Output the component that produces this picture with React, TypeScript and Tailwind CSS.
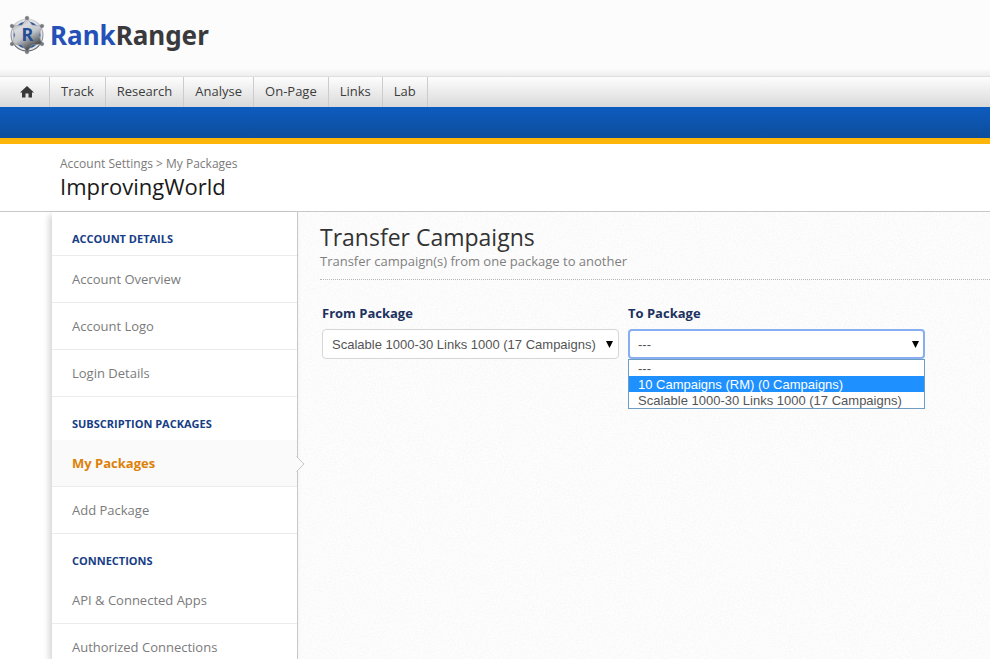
import { useState } from "react";

const NAV = ["Track", "Research", "Analyse", "On-Page", "Links", "Lab"];

const SECTIONS: { title: string; ruled?: boolean; items: string[] }[] = [
  { title: "Account Details", ruled: true, items: ["Account Overview", "Account Logo", "Login Details"] },
  { title: "Subscription Packages", items: ["My Packages", "Add Package"] },
  { title: "Connections", items: ["API & Connected Apps", "Authorized Connections"] },
];

const SCALABLE = "Scalable 1000-30 Links 1000 (17 Campaigns)";
const TARGETS = ["---", "10 Campaigns (RM) (0 Campaigns)", SCALABLE];

const STAR = "M18 3 L23 10 L33 11 L30 20 L33 29 L23 30 L18 37 L13 30 L3 29 L6 20 L3 11 L13 10 Z";
const TIPS = [[18, 3], [33, 11], [33, 29], [18, 37], [3, 29], [3, 11]];

function Badge() {
  return (
    <svg width="36" height="40" viewBox="0 0 36 40" aria-hidden="true">
      <defs>
        <linearGradient id="steel" x1="0" y1="0" x2="0.5" y2="1">
          <stop offset="0" stopColor="#8d9197" />
          <stop offset="0.35" stopColor="#d9dbde" />
          <stop offset="0.6" stopColor="#c4c7cb" />
          <stop offset="1" stopColor="#3c3e42" />
        </linearGradient>
        <linearGradient id="ring" x1="0" y1="0" x2="0" y2="1">
          <stop offset="0" stopColor="#d5d7da" />
          <stop offset="1" stopColor="#4c4f54" />
        </linearGradient>
      </defs>
      <circle cx="18" cy="20" r="16.5" fill="url(#ring)" />
      <circle cx="18" cy="20" r="15.5" fill="#dfe2e6" />
      <circle cx="18" cy="20" r="13.5" fill="#2b4f8f" />
      <path d={STAR} fill="url(#steel)" stroke="#a4a8ad" strokeWidth="0.6" strokeLinejoin="round" />
      {TIPS.map(([x, y]) => (
        <circle key={`${x}-${y}`} cx={x} cy={y} r="1.8" fill="#777b81" stroke="#5d6065" strokeWidth="0.4" />
      ))}
      <text x="18.5" y="26" textAnchor="middle" fontFamily="Noto Sans, sans-serif" fontWeight="700" fontSize="18" fill="#244d96">
        R
      </text>
    </svg>
  );
}

// fine paper grain behind the content area
function Grain() {
  return (
    <svg className="absolute inset-0 size-full opacity-10 pointer-events-none" aria-hidden="true">
      <filter id="grain">
        <feTurbulence type="fractalNoise" baseFrequency="0.6" numOctaves="2" stitchTiles="stitch" />
        <feColorMatrix values="0 0 0 0 0.5  0 0 0 0 0.5  0 0 0 0 0.5  2 0 0 0 -0.8" />
      </filter>
      <rect width="100%" height="100%" filter="url(#grain)" />
    </svg>
  );
}

function Sidebar() {
  return (
    <aside className="relative z-10 w-[246px] shrink-0 bg-white border-r border-[#c8c8c8] shadow-[-3px_3px_6px_rgba(0,0,0,0.16)]">
      {SECTIONS.map((sec) => (
        <section key={sec.title}>
          <h3
            className={`px-5 pt-[19px] pb-2 text-[11px] leading-4 font-bold uppercase text-[#163d85] ${
              sec.ruled ? "border-b border-[#ececec]" : ""
            }`}
          >
            {sec.title}
          </h3>
          <ul>
            {sec.items.map((item) => {
              const active = item === "My Packages";
              return (
                <li key={item} className={`relative border-b border-[#ececec] ${active ? "bg-[#fafafa]" : ""}`}>
                  <a
                    href="#"
                    className={`block px-5 py-[13px] text-[13px] leading-5 ${
                      active ? "font-bold text-[#dd8108]" : "text-[#7b7b7b]"
                    }`}
                  >
                    {item}
                  </a>
                  {active && (
                    <svg className="absolute -right-2 top-4" width="9" height="16" viewBox="0 0 9 16" aria-hidden="true">
                      <path d="M0 0 L8 8 L0 16 Z" fill="#fafafa" />
                      <path d="M0.5 0.5 L8 8 L0.5 15.5" fill="none" stroke="#c8c8c8" />
                    </svg>
                  )}
                </li>
              );
            })}
          </ul>
        </section>
      ))}
    </aside>
  );
}

const labelText = "block text-[13px] leading-5 font-bold text-[#1c3160]";
const selectBox =
  "w-full h-[30px] appearance-none bg-white pt-px pr-5 font-['Liberation_Sans',Arial,sans-serif] text-[13px] text-[#555555] rounded outline-none";

function Caret() {
  return (
    <svg className="absolute right-[6px] top-3 pointer-events-none" width="7" height="7" viewBox="0 0 7 7" aria-hidden="true">
      <path d="M0 0 H7 L3.5 7 Z" fill="#000" />
    </svg>
  );
}

function TransferForm() {
  const [target, setTarget] = useState("---");
  const [open, setOpen] = useState(true);

  function pick(value: string) {
    setTarget(value);
    setOpen(false);
  }

  return (
    <form className="flex gap-[9px] pl-[2px] pt-[23px]">
      <div className="w-[297px]">
        <label htmlFor="from" className={labelText}>
          From Package
        </label>
        <div className="relative mt-[6px]">
          <select id="from" className={`${selectBox} pl-[9px] border border-[#d6d6d6]`}>
            <option>{SCALABLE}</option>
          </select>
          <Caret />
        </div>
      </div>

      <div className="w-[297px]">
        <label htmlFor="to" className={labelText}>
          To Package
        </label>
        <div className="relative mt-[6px]">
          <select
            id="to"
            value={target}
            onChange={(e) => setTarget(e.target.value)}
            className={`${selectBox} pl-2 border-2 border-[#86aef0]`}
          >
            {TARGETS.map((t) => (
              <option key={t}>{t}</option>
            ))}
          </select>
          <Caret />
          {open && (
            <ul className="absolute left-0 top-[30px] w-full bg-white border border-[#6f9cc0] font-['Liberation_Sans',Arial,sans-serif] text-[13px]">
              {TARGETS.map((t, i) => (
                <li key={t}>
                  <button
                    type="button"
                    onClick={() => pick(t)}
                    className={`block w-full px-[9px] pt-px text-left leading-[15px] ${
                      i === 1 ? "bg-[#1e90ff] text-white" : "text-[#555555]"
                    }`}
                  >
                    {t}
                  </button>
                </li>
              ))}
            </ul>
          )}
        </div>
      </div>
    </form>
  );
}

export default function App() {
  return (
    <div className="h-screen overflow-hidden flex flex-col bg-white font-['Open_Sans','Noto_Sans',sans-serif]">
      <header className="h-[77px] shrink-0 bg-linear-to-b from-[#fcfcfc] from-90% to-[#ededed] border-b border-[#e0e0e0] px-[9px] pt-[15px]">
        <a href="#" className="flex items-center gap-[5px]">
          <Badge />
          <span className="font-['Noto_Sans',sans-serif] text-[26px] leading-10 font-bold text-[#3a3a3c]">
            <span className="text-[#2451b8]">Rank</span>Ranger
          </span>
        </a>
      </header>

      <nav className="h-[30px] shrink-0 flex bg-linear-to-b from-[#fdfdfd] to-[#dadada] text-[13px] text-[#3c3c3c]">
        <a href="#" aria-label="Home" className="w-[50px] pl-1 flex items-center justify-center border-r border-[#cccccc]">
          <svg width="14" height="12" viewBox="0 0 14 12" aria-hidden="true">
            <path d="M7 0 L14 6.6 H12 V11.5 H8.5 V7.5 H5.5 V11.5 H2 V6.6 H0 Z" fill="#383838" />
          </svg>
        </a>
        {NAV.map((label) => (
          <a key={label} href="#" className="px-[11px] flex items-center border-r border-[#cccccc]">
            {label}
          </a>
        ))}
      </nav>
      <div className="h-[37px] shrink-0 bg-linear-to-b from-[#0d5cc0] to-[#0d4d9b] border-b-6 border-[#fdb50a]" />

      <div className="h-[68px] shrink-0 border-b border-[#c8c8c8] pl-[60px] pt-3">
        <p className="text-[12px] leading-4 text-[#7b7b7b]">
          <a href="#">Account Settings</a> &gt; <a href="#">My Packages</a>
        </p>
        <h1 className="text-[22px] leading-7 text-[#1a1a1a]">ImprovingWorld</h1>
      </div>

      <div className="flex-1 min-h-0 flex pl-[52px]">
        <Sidebar />
        <main className="relative flex-1 bg-[#fdfdfd] pl-[22px]">
          <Grain />
          <div className="relative pt-[11px]">
            <h2 className="text-[23px] leading-7 text-[#333333]">Transfer Campaigns</h2>
            <p className="text-[13px] leading-5 pb-2 text-[#808080] border-b border-dotted border-[#b5b5b5]">
              Transfer campaign(s) from one package to another
            </p>
            <TransferForm />
          </div>
        </main>
      </div>
    </div>
  );
}
